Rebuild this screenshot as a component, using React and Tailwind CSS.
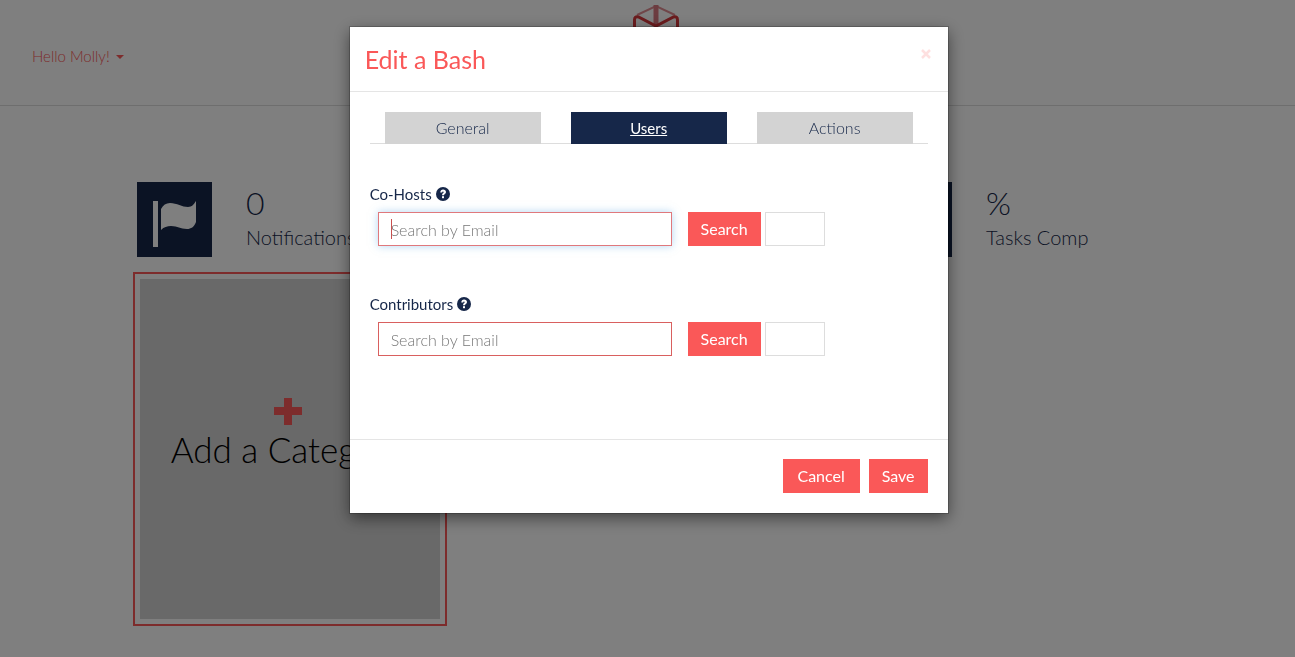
import React, { useState } from 'react';

const tabs = ['General', 'Users', 'Actions'];

const HelpIcon = () => (
  <svg viewBox="0 0 14 14" className="w-[14px] h-[14px]" aria-hidden="true">
    <circle cx="7" cy="7" r="7" fill="#162749" />
    <path d="M4.300 5.500C4.300 3.600 5.500 2.600 7.100 2.600s2.900 1 2.900 2.500c0 2-2 1.900-2 3.200H6c0-2.300 1.700-2.300 1.700-3.100 0-.5-.3-.8-.7-.8s-.8.4-.8 1.100z" fill="#fff" />
    <rect x="6" y="9.200" width="2" height="2" fill="#fff" />
  </svg>
);

const FlagIcon = () => (
  <svg viewBox="0 0 75 75" className="w-full h-full" aria-hidden="true">
    <rect x="16" y="19" width="5" height="46" fill="#fff" />
    <path d="M24 27c2-4 5-6 9-6 7 0 12 4 18 4 4 0 6-3 8-6v21c-2 5-5 7-9 7-7 0-9-3-16-3-4 0-7 1-10 4z" fill="#fff" />
  </svg>
);

const Logo = () => (
  <svg viewBox="0 0 48 52" className="w-12 h-[52px]" fill="none" aria-hidden="true">
    <path d="M5 11L24 2l19 9" stroke="#e08d93" strokeWidth="2" />
    <path d="M24 1v21" stroke="#d97880" strokeWidth="5" />
    <path d="M2.500 28V16q0-4 4-3L24 22l17.500-9q4-1 4 3v21L24 48 2.500 37V28" stroke="#d6383c" strokeWidth="3" />
  </svg>
);

const Stat = ({ value, label, icon }) => (
  <div className="flex">
    <div className="w-[75px] h-[75px] shrink-0 bg-[#162749]">{icon}</div>
    <div className="pl-[34px] pt-[3px] text-[#162749] whitespace-nowrap">
      <p className="text-[32px] leading-9 font-light">{value}</p>
      <p className="text-[20px] leading-8 font-light">{label}</p>
    </div>
  </div>
);

const UserSearch = ({ id, label, focused }) => (
  <div className="h-[110px]">
    <label htmlFor={id} className="flex items-center gap-1 h-5 mb-2 text-[15px] text-[#162749]">
      {label} <HelpIcon />
    </label>
    <div className="flex pl-2">
      <div className="relative w-[294px] mr-4">
        <input
          id={id}
          type="text"
          placeholder="Search by Email"
          className={`block w-full h-[34px] px-3 border bg-white text-base font-light placeholder:text-[#777] outline-none ${focused ? 'border-[#e0787c] shadow-[0_0_8px_rgba(102,175,233,0.5)]' : 'border-[#d9605f]'}`}
        />
        {focused && <span className="absolute left-[13px] top-[7px] w-px h-5 bg-[#c8504f]" />}
      </div>
      <button type="button" className="w-[73px] h-[34px] mr-1 bg-[#fa5858] text-white text-base">Search</button>
      <output htmlFor={id} className="block w-[60px] h-[34px] border border-[#ddd]" />
    </div>
  </div>
);

const Dashboard = () => (
  <div>
    <header className="grid grid-cols-3 h-[106px] border-b border-[#ddd]">
      <div className="flex items-center pl-8 pt-2">
        <button type="button" className="flex items-center gap-[6px] text-[15px] font-light text-[#fa5858]">
          Hello Molly!
          <span className="border-x-4 border-t-4 border-x-transparent border-t-[#fa5858]" />
        </button>
      </div>
      <div className="flex justify-center pt-1 pl-[18px]"><Logo /></div>
    </header>

    <main className="pl-[137px] pt-[76px]">
      <div className="grid grid-cols-[repeat(3,370px)]">
        <Stat value="0" label="Notifications" icon={<FlagIcon />} />
        <div />
        <Stat value="%" label="Tasks Comp" />
      </div>

      <div className="w-[314px] h-[354px] mt-[15px] -ml-1 border-2 border-[#fa5858] p-[5px]">
        <button type="button" className="flex flex-col items-center w-full h-full pt-[119px] pr-1 bg-[#d3d3d3] text-black">
          <svg viewBox="0 0 28 28" className="w-7 h-7" aria-hidden="true">
            <path d="M10 0h8v9h10v8H18v10h-8V17H0V9h10z" fill="#fa5858" />
          </svg>
          <span className="mt-[3px] text-[35px] leading-10 font-light whitespace-nowrap">Add a Category</span>
        </button>
      </div>
    </main>
  </div>
);

const App = () => {
  const [active, setActive] = useState('Users');

  return (
    <div className="relative min-h-screen overflow-hidden bg-white font-['Century_Gothic','Lato',sans-serif]">
      <Dashboard />

      <div className="fixed inset-0 bg-black/50">
        <div role="dialog" aria-labelledby="bash-title" className="w-[598px] ml-[27%] mt-[27px] bg-white shadow-[0_0_0_1px_rgba(0,0,0,0.2),0_5px_15px_rgba(0,0,0,0.5)]">
          <div className="flex justify-between h-[65px] px-[15px] border-b border-[#e5e5e5]">
            <h4 id="bash-title" className="pt-[14px] text-[25px] leading-9 text-[#fa5858]">Edit a Bash</h4>
            <button type="button" aria-label="Close" className="self-start w-[14px] h-[54px] text-[#fee0e0]">
              <svg viewBox="0 0 14 14" className="w-[14px] h-[14px]" aria-hidden="true">
                <path d="M3 3l8 8M11 3l-8 8" stroke="currentColor" strokeWidth="2.500" />
              </svg>
            </button>
          </div>

          <div className="h-[347px] px-5 pt-5">
            <div role="tablist" className="grid grid-cols-3 shadow-[inset_0_-1px_0_#ddd]">
              {tabs.map((tab) => (
                <button
                  key={tab}
                  type="button"
                  role="tab"
                  aria-selected={tab === active}
                  onClick={() => setActive(tab)}
                  className={`h-8 mx-[15px] ${tab === active ? 'bg-[#162749] text-[15px] text-white underline' : 'bg-[#d3d3d3] text-base text-[#162749] font-light'}`}
                >
                  {tab}
                </button>
              ))}
            </div>

            <div className="pt-10">
              <UserSearch id="co-hosts" label="Co-Hosts" focused />
              <UserSearch id="contributors" label="Contributors" />
            </div>
          </div>

          <div className="flex justify-end gap-[9px] px-5 pt-[19px] h-[74px] border-t border-[#e5e5e5]">
            <button type="button" className="w-[77px] h-[34px] bg-[#fa5858] text-white text-base">Cancel</button>
            <button type="button" className="w-[59px] h-[34px] bg-[#fa5858] text-white text-base">Save</button>
          </div>
        </div>
      </div>
    </div>
  );
};

export default App;
